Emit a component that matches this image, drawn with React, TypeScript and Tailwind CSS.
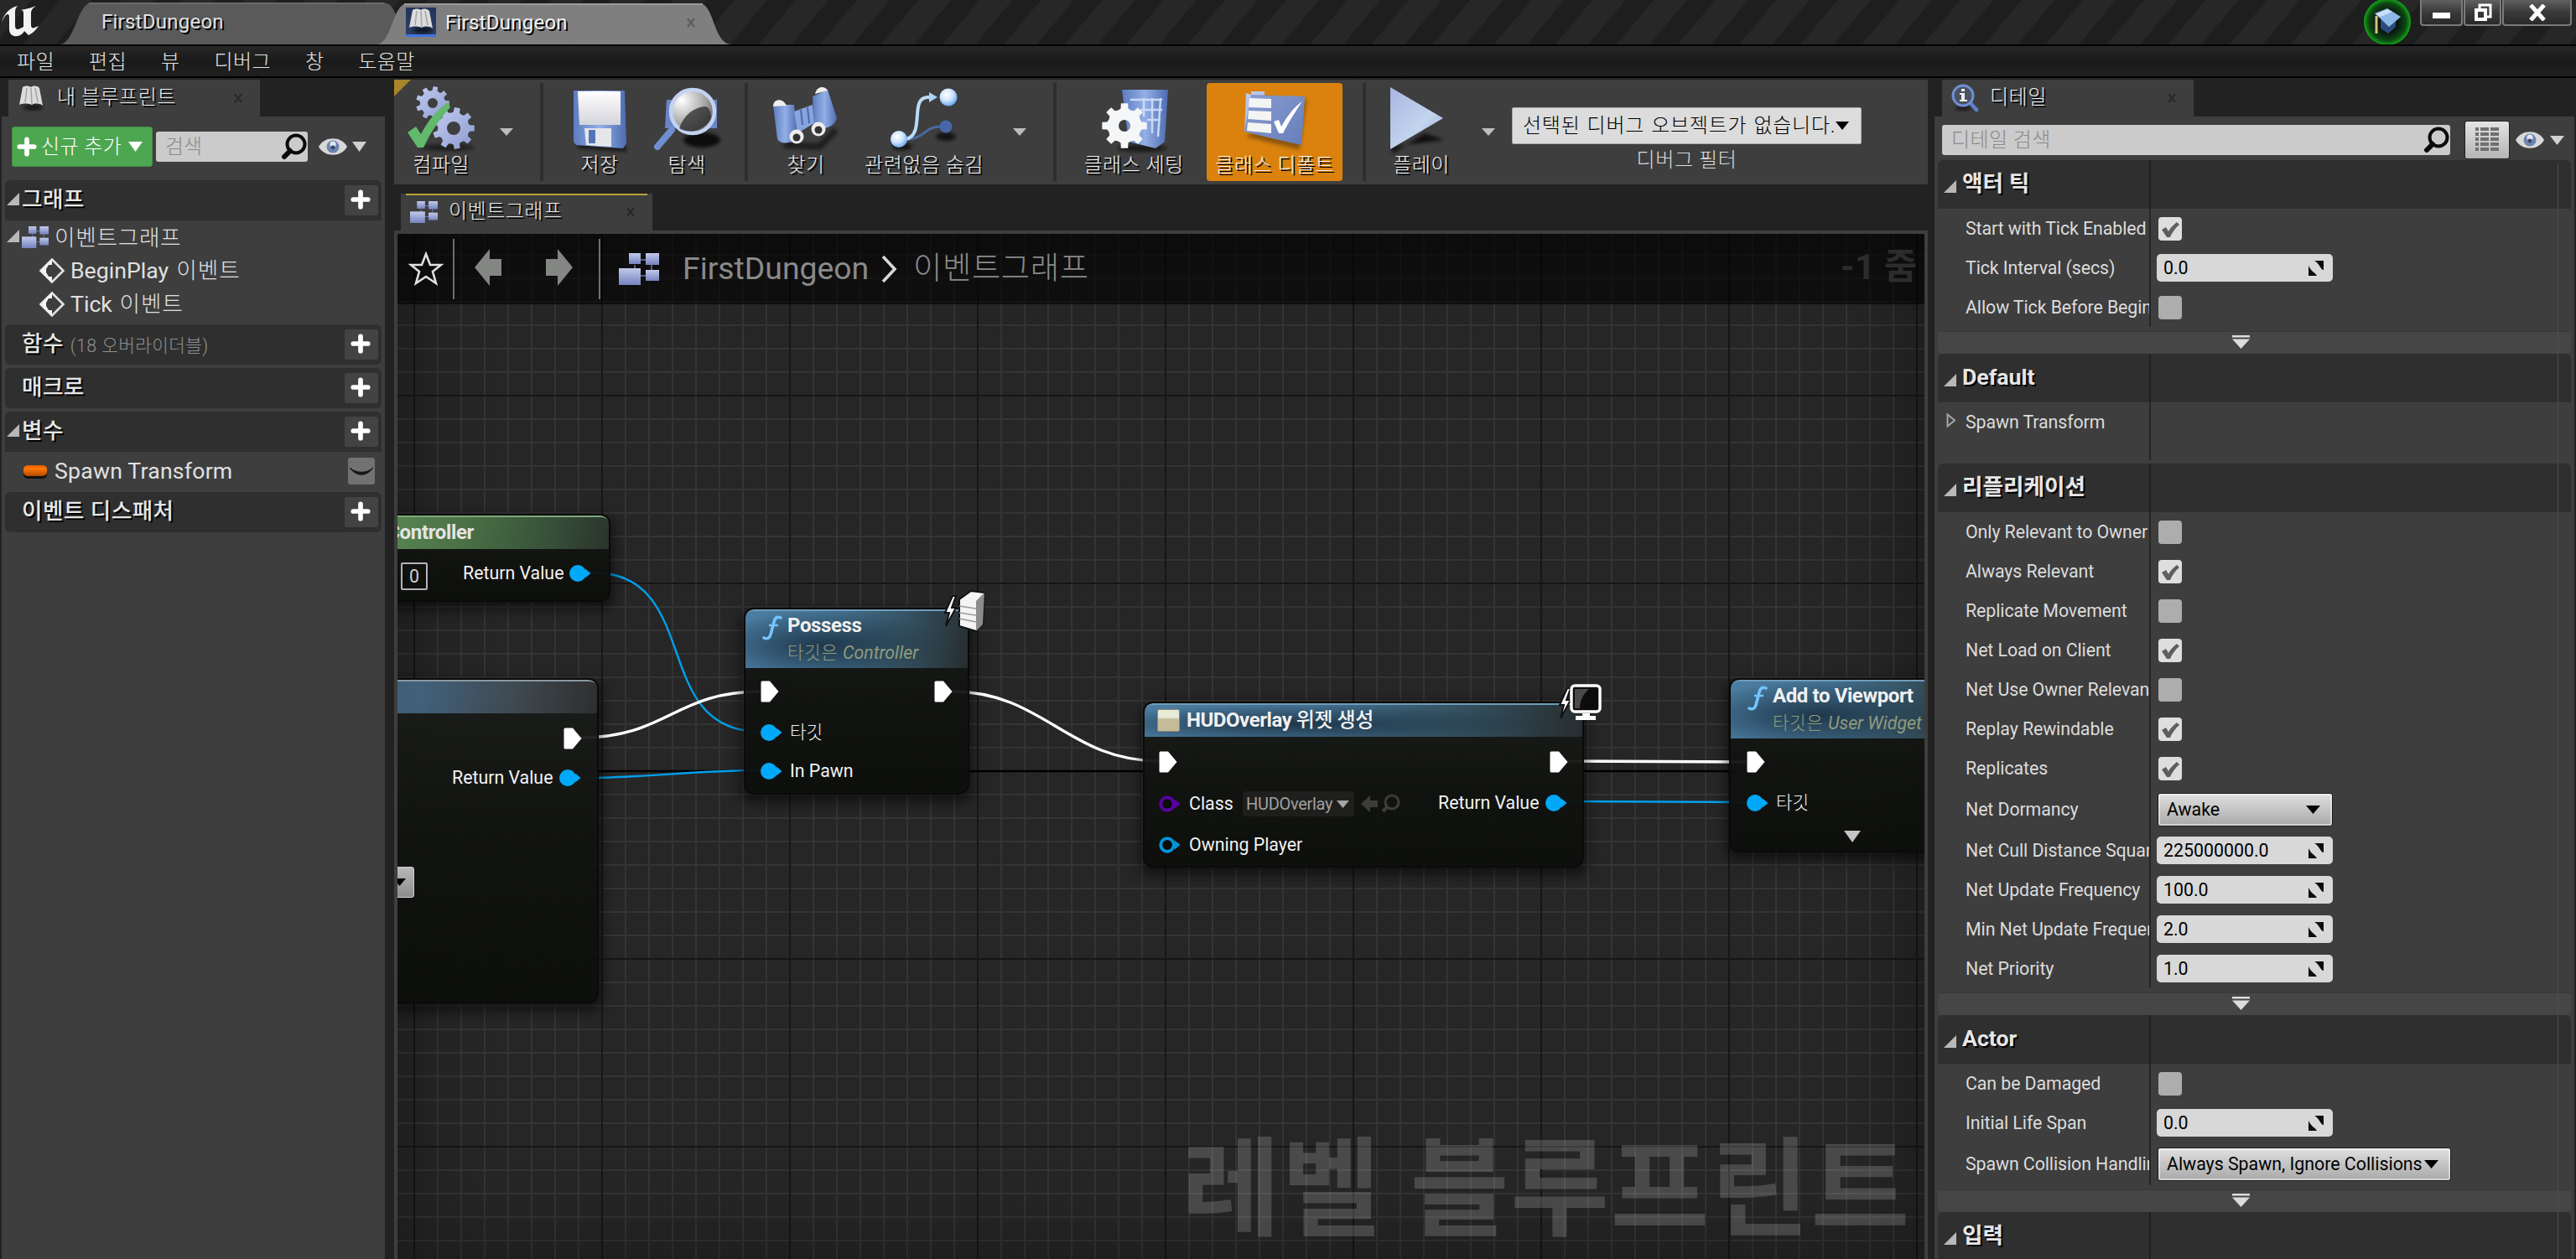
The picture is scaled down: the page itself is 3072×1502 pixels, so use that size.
import React from 'react';

const SHADOW = '[text-shadow:2px_2px_0_#000]';

function gearPath(cx: number, cy: number, r: number, teeth: number, hole: number) {
  const pts: string[] = [];
  for (let i = 0; i < teeth; i++) {
    const a = (i / teeth) * Math.PI * 2;
    const s = Math.PI / teeth;
    const add = (ang: number, rad: number) =>
      pts.push(`${(cx + Math.cos(ang) * rad).toFixed(1)} ${(cy + Math.sin(ang) * rad).toFixed(1)}`);
    add(a - s * 0.95, r * 0.74);
    add(a - s * 0.55, r * 0.78);
    add(a - s * 0.4, r);
    add(a + s * 0.4, r);
    add(a + s * 0.55, r * 0.78);
  }
  return `M${pts.join('L')}Z M${cx - hole} ${cy}a${hole} ${hole} 0 1 0 ${hole * 2} 0a${hole} ${hole} 0 1 0 ${-hole * 2} 0Z`;
}

function Defs() {
  return (
    <svg className="absolute h-0 w-0">
      <defs>
        <linearGradient id="blue" x1="0" y1="0" x2="1" y2="1">
          <stop offset="0" stopColor="#c3d0f2" />
          <stop offset="1" stopColor="#6f86c4" />
        </linearGradient>
        <linearGradient id="gear" x1="0" y1="0" x2="1" y2="1">
          <stop offset="0" stopColor="#c3cdf0" />
          <stop offset="1" stopColor="#8c9ad0" />
        </linearGradient>
        <linearGradient id="deep" x1="0" y1="0" x2="1" y2="0">
          <stop offset="0" stopColor="#5d7cc0" />
          <stop offset="0.5" stopColor="#93afe6" />
          <stop offset="1" stopColor="#4d6bb0" />
        </linearGradient>
        <linearGradient id="cell" x1="0" y1="0" x2="0" y2="1">
          <stop offset="0" stopColor="#c2caea" />
          <stop offset="1" stopColor="#7583c0" />
        </linearGradient>
        <linearGradient id="play" x1="0" y1="0" x2="1" y2="1">
          <stop offset="0" stopColor="#a9b5e2" />
          <stop offset="0.6" stopColor="#c3d5ee" />
          <stop offset="1" stopColor="#a0aad8" />
        </linearGradient>
        <linearGradient id="white" x1="0" y1="0" x2="0" y2="1">
          <stop offset="0" stopColor="#fff" />
          <stop offset="1" stopColor="#d4d4dc" />
        </linearGradient>
        <radialGradient id="ball" cx="0.4" cy="0.35" r="0.7">
          <stop offset="0" stopColor="#fff" />
          <stop offset="0.5" stopColor="#cfe6ff" />
          <stop offset="1" stopColor="#5f9fe8" />
        </radialGradient>
        <radialGradient id="lens" cx="0.25" cy="0.25" r="0.9">
          <stop offset="0" stopColor="#fff" />
          <stop offset="0.6" stopColor="#a5a5a5" />
          <stop offset="1" stopColor="#555" />
        </radialGradient>
        <linearGradient id="pill" x1="0" y1="0" x2="0" y2="1">
          <stop offset="0" stopColor="#e05a00" />
          <stop offset="0.3" stopColor="#ff7800" />
          <stop offset="1" stopColor="#b34a00" />
        </linearGradient>
        <filter id="soft" x="-50%" y="-50%" width="200%" height="200%">
          <feGaussianBlur stdDeviation="2" />
        </filter>
      </defs>
    </svg>
  );
}

function Down({ w = 16, h = 12, c = '#d0d0d0' }: { w?: number; h?: number; c?: string }) {
  return (
    <svg width={w} height={h} viewBox="0 0 16 12" preserveAspectRatio="none" className="shrink-0">
      <path d="M0 0H16L8 12Z" fill={c} />
    </svg>
  );
}

function Expanded() {
  return (
    <svg width="15" height="15" viewBox="0 0 15 15" className="shrink-0">
      <path d="M15 0V15H0Z" fill="#b8b8b8" />
    </svg>
  );
}

function CloseX({ c = '#292929' }: { c?: string }) {
  return (
    <svg width="12" height="12" viewBox="0 0 12 12" className="shrink-0">
      <path d="M2 1L10 11M10 1L2 11" stroke={c} strokeWidth="2.2" />
    </svg>
  );
}

function GraphIcon({ w, h }: { w: number; h: number }) {
  return (
    <svg width={w} height={h} viewBox="0 0 48 38" preserveAspectRatio="none" className="shrink-0">
      <path d="M24 8H34M39 12V22M24 27H34M19 14V20" stroke="#6d7aa8" strokeWidth="1.5" />
      <rect x="12" y="0" width="14" height="13" fill="url(#cell)" />
      <rect x="32" y="0" width="16" height="14" fill="url(#cell)" />
      <rect x="0" y="18" width="26" height="20" fill="url(#cell)" />
      <rect x="32" y="20" width="16" height="13" fill="url(#cell)" />
    </svg>
  );
}

function BookIcon() {
  return (
    <svg width="32" height="32" viewBox="0 0 32 32" className="shrink-0">
      <ellipse cx="18" cy="27" rx="12" ry="4" fill="#000" opacity="0.6" filter="url(#soft)" />
      <path d="M6 3C9 1 13 1 16 3C19 1 23 1 26 4L30 25C26 22 21 22 17 24C12 22 6 22 2 24Z" fill="#dcdcdc" />
      <path d="M11 4L9 21M16 4L17 23M21 4L24 21" stroke="#a4a4a4" strokeWidth="1.5" />
    </svg>
  );
}

function SearchIcon() {
  return (
    <svg width="32" height="32" viewBox="0 0 32 32" className="shrink-0">
      <circle cx="18" cy="13" r="10.5" fill="none" stroke="#0a0a0a" strokeWidth="4" />
      <path d="M11 21L4 28" stroke="#0a0a0a" strokeWidth="6" strokeLinecap="round" />
    </svg>
  );
}

function EyeIcon() {
  return (
    <svg width="36" height="22" viewBox="0 0 36 22" className="shrink-0">
      <path d="M1 11C8 -2 28 -2 35 11C28 24 8 24 1 11Z" fill="#d8d8d8" />
      <circle cx="18" cy="11" r="7.5" fill="#6d84b0" />
      <circle cx="18" cy="8" r="3.6" fill="#dfe6f2" />
      <circle cx="18" cy="12" r="2.4" fill="#39466b" />
    </svg>
  );
}

function PlusIcon({ s = 22 }: { s?: number }) {
  return (
    <svg width={s} height={s} viewBox="0 0 22 22" className="shrink-0">
      <path d="M11 3V19M3 11H19" stroke="#fff" strokeWidth="5.2" strokeLinecap="round" />
    </svg>
  );
}

function Logo() {
  return (
    <svg width="48" height="46" viewBox="0 0 48 46" className="shrink-0">
      <path
        d="M2 27C4 17 12 9 21 7C19 9 18 11 18 14V31C18 35 21 36 24 34L28 32V16C28 13 27 12 25 12C30 11 35 10 43 7C38 10 37 13 37 16V30C37 33 39 34 41 33L46 31C43 36 38 40 34 42L29 37C27 41 22 44 17 43C13 42 11 39 11 35V20C11 17 9 16 7 18C5 20 3 24 2 27Z"
        fill="#f2f2f2"
      />
    </svg>
  );
}

function WindowButton({ w, children }: { w: string; children: React.ReactNode }) {
  return (
    <div
      className={`${w} flex h-[31px] items-center justify-center rounded-b-[4px] border-2 border-t-0 border-[#7b7b7b] bg-gradient-to-b from-[#606060] via-[#3a3a3a] to-[#2a2a2a]`}
    >
      {children}
    </div>
  );
}

function TitleBar() {
  return (
    <div className="flex h-[53px] shrink-0 bg-[repeating-linear-gradient(130deg,#272727_0px,#272727_28px,#1e1e1e_30px,#1e1e1e_54px,#272727_56px)]">
      <div className="w-[72px]">
        <Logo />
      </div>
      <div className="relative h-[53px] w-[378px]">
        <svg width="408" height="53" viewBox="0 0 408 53" className="absolute left-0 top-0">
          <path d="M0 53C18 50 20 3 38 3H382C396 3 398 12 403 25L408 53Z" fill="#5a5a5a" />
          <path d="M34 4H386" stroke="#727272" strokeWidth="1.5" />
        </svg>
        <div className={`relative pt-[10px] pl-[49px] text-[24px] leading-[32px] tracking-[0.25px] text-[#e0e0e0] ${SHADOW}`}>FirstDungeon</div>
      </div>
      <div className="relative h-[53px] w-[421px]">
        <svg width="421" height="53" viewBox="0 0 421 53" className="absolute left-0 top-0">
          <path d="M0 53C18 50 18 4 36 4H384C402 4 400 50 421 53Z" fill="#7f7f7f" />
          <path d="M32 5H388" stroke="#9c9c9c" strokeWidth="2" />
        </svg>
        <div className="relative flex h-[53px] items-center pl-[34px]">
          <div className="h-[35px] w-[36px] border-b-[3px] border-[#3f74e0] bg-gradient-to-b from-[#22355c] to-[#2c3f66] pl-[2px]">
            <BookIcon />
          </div>
          <div className={`ml-[11px] w-[287px] text-[24px] leading-[32px] tracking-[0.25px] text-[#f0f0f0] ${SHADOW}`}>FirstDungeon</div>
          <CloseX c="#5c5c5c" />
        </div>
      </div>
      <div className="flex-1" />
      <svg width="56" height="56" viewBox="0 0 56 56" className="mr-[11px] -mt-[2px] shrink-0">
        <defs>
          <radialGradient id="ring">
            <stop offset="0.45" stopColor="#0b1410" />
            <stop offset="0.8" stopColor="#0c4a12" />
            <stop offset="1" stopColor="#12a81a" />
          </radialGradient>
        </defs>
        <circle cx="28" cy="28" r="28" fill="url(#ring)" />
        <path d="M20 26V36L29 42L38 34V24Z" fill="#2a4c7c" />
        <path d="M13 18L28 12L44 22L30 34Z" fill="#8db8e6" />
        <path d="M14 19L28 13L34 16L20 22Z" fill="#c8e0f6" />
        <path d="M15 21V42" stroke="#d9c07a" strokeWidth="3" />
      </svg>
      <div className="mr-[5px] flex gap-[1px]">
        <WindowButton w="w-[51px]">
          <div className="mt-[8px] h-[7px] w-[21px] bg-white" />
        </WindowButton>
        <WindowButton w="w-[45px]">
          <svg width="22" height="22" viewBox="0 0 22 22">
            <path d="M7 6V2H20V16H16" fill="none" stroke="#fff" strokeWidth="3" />
            <rect x="3" y="8" width="11" height="11" fill="none" stroke="#fff" strokeWidth="4" />
          </svg>
        </WindowButton>
        <WindowButton w="w-[83px]">
          <svg width="22" height="20" viewBox="0 0 22 20">
            <path d="M3 1L19 19M19 1L3 19" stroke="#fff" strokeWidth="5" />
          </svg>
        </WindowButton>
      </div>
    </div>
  );
}

function MenuBar() {
  return (
    <div className="flex h-[40px] shrink-0 items-center gap-[41px] border-y-2 border-black bg-gradient-to-b from-[#272727] via-[#1a1a1a] to-[#202020] pl-[20px] pt-[1px] text-[24px] font-light tracking-[0.4px] text-[#e4e4e4]">
      {['파일', '편집', '뷰', '디버그', '창', '도움말'].map((m) => (
        <div key={m}>{m}</div>
      ))}
    </div>
  );
}

function PanelTab({ icon, label, gap }: { icon: React.ReactNode; label: string; gap: string }) {
  return (
    <div className="flex h-[44px] w-[300px] items-center bg-[#3e3e3e] pl-[11px] pr-[20px]">
      <div className={gap}>{icon}</div>
      <div className={`flex-1 pb-[2px] text-[24px] leading-[32px] font-light tracking-[0.5px] text-[#e8e8e8] ${SHADOW}`}>{label}</div>
      <CloseX />
    </div>
  );
}

function TreeSection({ label, note, open, square }: { label: string; note?: string; open?: boolean; square?: boolean }) {
  return (
    <div className={`flex h-[48px] shrink-0 items-center bg-[#2f2f2f] pl-[2px] pr-[4px] ${square ? 'rounded-t-[6px]' : 'rounded-[6px]'}`}>
      <div className="w-[18px] pb-[3px]">{open && <Expanded />}</div>
      <div className={`pb-[2px] text-[26.67px] leading-[36px] font-medium tracking-[0.4px] text-[#e6e6e6] ${SHADOW}`}>{label}</div>
      {note && <div className="ml-[8px] pt-[4px] text-[21.33px] font-light tracking-[0.4px] text-[#8f8f8f]">{note}</div>}
      <div className="flex-1" />
      <div className="flex h-[36px] w-[40px] items-center justify-center rounded-[3px] bg-[#434343] pb-[2px] pr-[2px]">
        <PlusIcon s={24} />
      </div>
    </div>
  );
}

function EventIcon() {
  return (
    <svg width="32" height="32" viewBox="0 0 32 32" className="shrink-0">
      <path d="M16 2.5L29.5 16L16 29.5L2.5 16Z" fill="none" stroke="#e2e2e2" strokeWidth="2.6" />
      <path d="M16 2L2 16L16 30V23H12L9 18V14L12 9H16Z" fill="#f4f4f4" />
    </svg>
  );
}

function LeftPanel() {
  return (
    <div className="flex w-[459px] shrink-0 flex-col pl-[2px] pt-[2px]">
      <div className="pl-[8px]">
        <PanelTab icon={<BookIcon />} label="내 블루프린트" gap="w-[47px]" />
      </div>
      <div className="flex flex-1 flex-col bg-[#3e3e3e] pl-[4px] pr-[4px]">
        <div className="flex h-[76px] items-center pb-[4px] pl-[8px]">
          <div className="flex h-[48px] w-[168px] items-center rounded-[3px] border border-[#3f8f43] bg-[#4da751] pl-[5px]">
            <PlusIcon s={24} />
            <div className="ml-[5px] w-[104px] text-[24px] font-light tracking-[0.4px] whitespace-nowrap text-white">신규 추가</div>
            <Down w={17} h={12} c="#fff" />
          </div>
          <div className="ml-[4px] flex h-[36px] w-[181px] items-center justify-between rounded-[3px] bg-[#cbcbcb] pl-[11px] text-[24px] font-light text-[#8a8a8a]">
            검색
            <SearchIcon />
          </div>
          <div className="ml-[12px] flex items-center gap-[5px]">
            <EyeIcon />
            <Down w={17} h={12} />
          </div>
        </div>
        <TreeSection label="그래프" open square />
        <div className="flex h-[120px] flex-col text-[26.67px] text-[#e0e0e0]">
          <div className="flex h-[40px] items-center pl-[2px] font-light">
            <div className="pb-[3px]">
              <Expanded />
            </div>
            <div className="ml-[3px]">
              <GraphIcon w={32} h={26} />
            </div>
            <div className="ml-[7px] pt-[1px] tracking-[0.7px]">이벤트그래프</div>
          </div>
          <div className="flex h-[40px] items-center pl-[40px]">
            <EventIcon />
            <div className="ml-[6px] [word-spacing:2.5px]">BeginPlay <span className="font-light tracking-[1px]">이벤트</span></div>
          </div>
          <div className="flex h-[40px] items-center pl-[40px]">
            <EventIcon />
            <div className="ml-[6px] [word-spacing:2px]">Tick <span className="font-light tracking-[0.9px]">이벤트</span></div>
          </div>
        </div>
        <div className="mt-[4px] flex flex-col gap-[4px]">
          <TreeSection label="함수" note="(18 오버라이더블)" />
          <TreeSection label="매크로" />
          <TreeSection label="변수" open square />
        </div>
        <div className="flex h-[48px] items-center pb-[3px] pl-[21px] pr-[8px]">
          <svg width="30" height="18" viewBox="0 0 30 18" className="mt-[3px]">
            <rect x="1" y="4" width="28" height="13" rx="5" fill="#111" />
            <rect x="1" y="1" width="28" height="13" rx="5" fill="url(#pill)" />
          </svg>
          <div className="ml-[8px] flex-1 text-[26.67px] tracking-[0.2px] text-[#e0e0e0]">Spawn Transform</div>
          <div className="flex h-[32px] w-[32px] items-center justify-center rounded-[3px] bg-[#727272]">
            <svg width="28" height="12" viewBox="0 0 28 12">
              <path d="M0 2C8 9 20 9 28 2C20 13 8 13 0 2Z" fill="#161616" stroke="#161616" />
            </svg>
          </div>
        </div>
        <TreeSection label="이벤트 디스패처" />
      </div>
    </div>
  );
}

function ToolButton({ w, label, active, children }: { w: string; label: string; active?: boolean; children: React.ReactNode }) {
  return (
    <div className={`${w} flex h-[117px] shrink-0 flex-col items-center rounded-[4px] ${active ? 'bg-[#da820d]' : ''}`}>
      <svg width="88" height="86" viewBox="0 0 88 86" className="shrink-0">
        {children}
      </svg>
      <div className={`text-[24px] leading-[24px] font-light tracking-[0.5px] whitespace-nowrap text-[#ededed] ${SHADOW}`}>{label}</div>
    </div>
  );
}

function Sep({ m }: { m: string }) {
  return <div className={`${m} h-[117px] w-[4px] shrink-0 bg-[#2e2e2e]`} />;
}

function Arrow() {
  return (
    <div className="w-[16px] shrink-0">
      <Down w={16} h={9} c="#bdbdbd" />
    </div>
  );
}

function Toolbar() {
  return (
    <div className="relative flex h-[125px] shrink-0 items-center bg-[#3e3e3e] pl-[4px]">
      <svg width="20" height="20" viewBox="0 0 20 20" className="absolute left-0 top-0">
        <path d="M0 0H20L0 20Z" fill="#a8842a" />
      </svg>
      <ToolButton w="w-[104px]" label="컴파일">
        <ellipse cx="52" cy="77" rx="32" ry="4" fill="#000" opacity="0.5" filter="url(#soft)" />
        <path d={gearPath(34, 24, 20, 9, 6)} fill="url(#gear)" fillRule="evenodd" />
        <path d={gearPath(59, 54, 25, 9, 8)} fill="url(#gear)" fillRule="evenodd" />
        <path d="M4 59L14 52L20 61C27 47 40 31 52 23L55 29C43 42 31 60 23 77H16Z" fill="#62b96c" />
      </ToolButton>
      <div className="ml-[18px]">
        <Arrow />
      </div>
      <Sep m="ml-[32px]" />
      <ToolButton w="w-[104px] ml-[15px]" label="저장">
        <path d="M16 72L76 76V82L20 78Z" fill="#000" opacity="0.6" filter="url(#soft)" />
        <path d="M13 9H74L76 72L72 78L16 74L13 70Z" fill="url(#deep)" />
        <path d="M18 10H69V50H20Z" fill="url(#white)" />
        <path d="M26 54H58V76L28 74Z" fill="#e6e6ea" />
        <rect x="31" y="56" width="8" height="16" fill="#5573b8" />
      </ToolButton>
      <ToolButton w="w-[104px]" label="탐색">
        <ellipse cx="62" cy="68" rx="22" ry="9" fill="#000" opacity="0.8" filter="url(#soft)" />
        <path d="M20 20H80V54H18Z" fill="#6a86c6" />
        <path d="M9 76L26 56" stroke="#6f8fd0" strokeWidth="8" strokeLinecap="round" />
        <circle cx="51" cy="34" r="26" fill="url(#lens)" stroke="#c4d2f2" strokeWidth="4.5" />
        <path d="M35 54C43 60 63 60 73 42C73 32 69 28 65 28C51 30 41 38 35 54Z" fill="#2a2a2a" opacity="0.75" />
      </ToolButton>
      <Sep m="ml-[17px]" />
      <ToolButton w="w-[104px] ml-[17px]" label="찾기">
        <path d="M18 74L60 76L80 56" stroke="#000" strokeWidth="8" opacity="0.5" fill="none" filter="url(#soft)" />
        <path d="M5 26L30 26L34 66C28 72 14 74 10 67Z" fill="url(#deep)" />
        <path d="M52 16L70 8L81 42C78 54 60 58 54 50Z" fill="url(#deep)" />
        <path d="M5 28C5 19 16 17 21 27Z M55 13C57 3 67 3 70 9Z" fill="#f0eee8" />
        <path d="M30 34L52 26L54 48L34 60Z" fill="#88a4de" />
        <path d="M38 32L40 50M46 29L48 48" stroke="#4d68a8" strokeWidth="2" />
        <circle cx="33" cy="64" r="8.5" fill="#ececec" />
        <circle cx="33" cy="65" r="4.5" fill="#333" />
        <circle cx="59" cy="55" r="8.5" fill="#ececec" />
        <circle cx="59" cy="56" r="4.5" fill="#333" />
      </ToolButton>
      <ToolButton w="w-[178px]" label="관련없음 숨김">
        <ellipse cx="70" cy="64" rx="12" ry="5" fill="#000" opacity="0.7" filter="url(#soft)" />
        <ellipse cx="18" cy="76" rx="12" ry="4" fill="#000" opacity="0.7" filter="url(#soft)" />
        <path d="M24 67C46 66 44 52 64 52" stroke="#4a68a0" strokeWidth="3" fill="none" />
        <path d="M22 67C46 62 26 18 48 17H54" stroke="#b9dcf6" strokeWidth="4" fill="none" />
        <path d="M50 11L60 17L50 23Z" fill="#a9d2f4" />
        <circle cx="14" cy="67" r="10" fill="url(#ball)" />
        <circle cx="73" cy="17" r="10.5" fill="url(#ball)" />
        <circle cx="70" cy="52" r="7.5" fill="#4766a8" />
      </ToolButton>
      <div className="ml-[17px]">
        <Arrow />
      </div>
      <Sep m="ml-[32px]" />
      <ToolButton w="w-[154px] ml-[15px]" label="클래스 세팅">
        <ellipse cx="54" cy="78" rx="30" ry="4" fill="#000" opacity="0.6" filter="url(#soft)" />
        <path d="M30 8H85L81 70L70 78L38 70Z" fill="url(#deep)" />
        <path d="M40 20H78M52 32H78M60 44H76M56 18V40M66 18V60M76 18L73 64" stroke="#c9daf6" strokeWidth="2.5" fill="none" />
        <path d={gearPath(33, 51, 27, 8, 7)} fill="#f4f6f8" fillRule="evenodd" />
      </ToolButton>
      <ToolButton w="w-[162px] ml-[10px]" label="클래스 디폴트" active>
        <path d="M10 64L74 80L82 20L76 18Z" fill="#5b3a0c" opacity="0.6" filter="url(#soft)" />
        <path d="M16 14V10H32V15L80 16L76 74L8 58L10 12Z" fill="url(#blue)" />
        <path d="M16 14L80 16L76 74L8 58Z" fill="#5d76b4" opacity="0.55" />
        <path d="M14 18L40 19V30L13 29Z M13 33L40 34V45L12 43Z M12 47L40 49V60L11 57Z" fill="#f4f4f4" />
        <path d="M43 46L49 44L52 52C60 38 68 28 77 22C69 34 60 48 54 60H49Z" fill="#fff" />
      </ToolButton>
      <Sep m="ml-[24px]" />
      <ToolButton w="w-[110px] ml-[11px]" label="플레이">
        <path d="M8 76L72 68L48 60L10 84Z" fill="#000" opacity="0.75" filter="url(#soft)" />
        <path d="M7 5L70 42L7 79Z" fill="url(#play)" />
      </ToolButton>
      <div className="ml-[17px]">
        <Arrow />
      </div>
      <div className="ml-[20px] flex w-[417px] shrink-0 flex-col items-center pt-[19px]">
        <div className="flex h-[44px] w-[417px] items-center justify-between rounded-[2px] border border-[#aaa] bg-[#dcdcdc] pl-[12px] pr-[15px] text-[24px] whitespace-nowrap text-black">
          <span className="font-light tracking-[0.75px] [word-spacing:1.5px]">선택된 디버그 오브젝트가 없습니다.</span>
          <Down w={16} h={10} c="#000" />
        </div>
        <div className="mt-[3px] text-[24px] leading-[32px] font-light tracking-[0.6px] text-[#dcdcdc]">디버그 필터</div>
      </div>
    </div>
  );
}

function Pin({ c = '#00a8f8', hollow }: { c?: string; hollow?: boolean }) {
  return (
    <svg width="26" height="22" viewBox="0 0 26 22" className="shrink-0">
      <path d="M19 5.5L25.5 11L19 16.5Z" fill={c} />
      {hollow ? (
        <circle cx="10" cy="11" r="7.8" fill="#0a0c0a" stroke={c} strokeWidth="3.8" />
      ) : (
        <circle cx="10" cy="11" r="10" fill={c} />
      )}
    </svg>
  );
}

function Exec() {
  return (
    <svg width="22" height="26" viewBox="0 0 22 26" className="shrink-0">
      <path d="M2 0.5H11L21.5 13L11 25.5H2Q0.5 25.5 0.5 24V2Q0.5 0.5 2 0.5Z" fill="#fff" />
    </svg>
  );
}

function Node({ place, head, header, children }: { place: string; head: string; header: React.ReactNode; children: React.ReactNode }) {
  return (
    <div className={`absolute overflow-hidden rounded-[12px] border-2 border-[#0a0a0a] bg-gradient-to-b from-[#1b1d1a]/95 via-[#10120f]/95 to-[#0c0e0b]/95 shadow-[0_6px_14px_4px_rgba(0,0,0,0.5)] ${place}`}>
      <div className={`shrink-0 rounded-t-[9px] border-t-2 ${head}`}>{header}</div>
      {children}
    </div>
  );
}

const BLUE_HEAD =
  'border-[#6f9cba] bg-[radial-gradient(ellipse_55%_60%_at_35%_60%,rgba(24,45,62,0.85),transparent),linear-gradient(100deg,#4c7ea3_0%,#436f8e_40%,#34505f_72%,#262d2f_100%)]';

function FuncIcon() {
  return (
    <svg width="24" height="30" viewBox="0 0 24 30" className="shrink-0">
      <path d="M22 3C18 1 15 3 14 8L10 23C9 27 6 29 2 27" stroke="#74c4ff" strokeWidth="3.6" fill="none" strokeLinecap="round" />
      <path d="M8 12H19" stroke="#74c4ff" strokeWidth="2.6" />
    </svg>
  );
}

function Bolt() {
  return <path d="M10 8L1 28H6L2 44L14 22H9L14 8Z" fill="#fff" stroke="#111" strokeWidth="2" />;
}

function FuncHeader({ title, target }: { title: string; target: string }) {
  return (
    <div className="flex h-[68px] pl-[20px]">
      <div className="pt-[5px]">
        <FuncIcon />
      </div>
      <div className="ml-[6px] flex flex-col whitespace-nowrap">
        <div className="mt-[2px] text-[24px] leading-[30px] font-bold tracking-[-0.4px] text-[#f0f0f0]">{title}</div>
        <div className="mt-[4px] text-[21.33px] leading-[28px] text-[#8f9b7c]">
          <span className="font-light tracking-[0.5px]">타깃은 </span>
          <span className="italic">{target}</span>
        </div>
      </div>
    </div>
  );
}

const PIN_TEXT = 'text-[21.33px] leading-[28px] whitespace-nowrap text-[#f2f2f2]';

function Graph() {
  const wires = [
    ['M706 683C840 683 773 873 907 873', '#00a0ec', 2.4],
    ['M693 880C795 880 805 825 907 825', '#fff', 3.4],
    ['M700 928C770 928 830 919 907 919', '#00a0ec', 2.4],
    ['M1135 825C1245 825 1273 908 1383 908', '#fff', 3.4],
    ['M1869 908L2083 909', '#fff', 3.6],
    ['M1868 956L2083 957', '#00a0ec', 2.4],
  ] as const;
  return (
    <div className="relative flex-1 overflow-hidden border-4 border-b-0 border-[#3e3e3e] bg-[#262626]">
      <svg width="1821" height="1223" viewBox="474 279 1821 1223" className="absolute left-0 top-0">
        <defs>
          <pattern id="minor" x="493" y="695" width="28" height="28" patternUnits="userSpaceOnUse">
            <path d="M0 1H28M1 0V28" stroke="#343434" strokeWidth="2" />
          </pattern>
          <pattern id="major" x="493" y="695" width="224" height="224" patternUnits="userSpaceOnUse">
            <path d="M0 1H224M1 0V224" stroke="#161616" strokeWidth="2" />
          </pattern>
        </defs>
        <rect x="474" y="279" width="1821" height="1223" fill="url(#minor)" />
        <rect x="474" y="279" width="1821" height="1223" fill="url(#major)" />
        <path d="M474 920H2295" stroke="#000" strokeWidth="2.5" />
      </svg>
      <div className="absolute inset-0 shadow-[inset_0_0_90px_20px_rgba(0,0,0,0.28)]" />
      <div className="absolute bottom-[7px] right-[16px] text-[128px] leading-[150px] font-bold tracking-[1.7px] whitespace-nowrap text-white/[0.17]">레벨 블루프린트</div>
      <svg width="1821" height="1223" viewBox="474 279 1821 1223" className="absolute left-0 top-0">
        {wires.map(([d, c, w]) => (
          <path key={d} d={d} stroke={c} strokeWidth={w} fill="none" />
        ))}
      </svg>

      <Node
        place="left-[-60px] top-[334px] h-[105px] w-[314px]"
        head="border-[#7ea878] bg-[linear-gradient(100deg,#5f8f57_0%,#4a7045_45%,#38523a_75%,#2b332b_100%)]"
        header={<div className="flex h-[38px] items-center justify-end pb-[2px] pr-[161px] text-[24px] font-bold tracking-[-0.35px] text-[#e4e4e4]">Controller</div>}
      >
        <div className="flex items-center pl-[62px] pt-[10px]">
          <div className="mt-[6px] flex h-[33px] w-[32px] items-center justify-center rounded-[2px] border-2 border-[#b5b5b5] text-[21.33px] text-[#cfcfcf]">0</div>
          <div className={`ml-[42px] w-[127px] pb-[2px] ${PIN_TEXT}`}>Return Value</div>
          <div className="pb-[2px]">
            <Pin />
          </div>
        </div>
      </Node>

      <Node
        place="left-[-60px] top-[530px] h-[388px] w-[300px]"
        head="border-[#8a98a2] bg-[linear-gradient(100deg,#3f5f78_0%,#41607a_30%,#3f4a52_65%,#2e2e2e_100%)]"
        header={<div className="h-[38px]" />}
      >
        <div className="flex flex-col">
          <div className="flex h-[56px] items-center justify-end pt-[3px] pr-[18px]">
            <Exec />
          </div>
          <div className="flex h-[42px] items-center justify-end pr-[19px]">
            <div className={`w-[128px] ${PIN_TEXT}`}>Return Value</div>
            <Pin />
          </div>
          <div className="mt-[85px] flex h-[37px] w-[78px] items-center justify-end rounded-[3px] border border-[#d0d0d0] bg-gradient-to-b from-[#b8b8b8] to-[#8d8d8d] pr-[9px]">
            <Down w={15} h={9} c="#000" />
          </div>
        </div>
      </Node>

      <Node place="left-[413px] top-[446px] h-[223px] w-[269px]" head={BLUE_HEAD} header={<FuncHeader title="Possess" target="Controller" />}>
        <div className="flex justify-between pt-[4px] pl-[18px] pr-[18px]">
          <div className="flex flex-col">
            <div className="flex h-[48px] items-center">
              <Exec />
            </div>
            <div className="flex h-[49px] items-center gap-[9px]">
              <Pin />
              <div className={`${PIN_TEXT} font-light`}>타깃</div>
            </div>
            <div className="flex h-[43px] items-center gap-[9px]">
              <Pin />
              <div className={PIN_TEXT}>In Pawn</div>
            </div>
          </div>
          <div className="flex h-[48px] items-center">
            <Exec />
          </div>
        </div>
      </Node>
      <svg width="52" height="52" viewBox="0 0 52 52" className="absolute left-[652px] top-[424px]">
        <Bolt />
        <path d="M18 12L32 2L48 4L46 42L38 50L18 44Z" fill="#f4f4f4" stroke="#111" strokeWidth="2" />
        <path d="M38 14L48 4L46 42L38 50Z" fill="#8c8c8c" />
        <path d="M18 20L38 23M18 28L38 31M18 35L38 39" stroke="#9a9a9a" strokeWidth="1.5" />
      </svg>

      <Node
        place="left-[889px] top-[558px] h-[198px] w-[526px]"
        head={BLUE_HEAD}
        header={
          <div className="flex h-[38px] items-center pl-[15px]">
            <div className="mb-[2px] h-[27px] w-[27px] rounded-[2px] border border-[#8d8a75] bg-gradient-to-b from-[#e6ead8] from-35% to-[#c4bb98] to-45%" />
            <div className="ml-[8px] pb-[2px] text-[24px] leading-[32px] font-bold tracking-[-0.45px] whitespace-nowrap text-[#f0f0f0]">
              HUDOverlay <span className="font-medium">위젯 생성</span>
            </div>
          </div>
        }
      >
        <div className="flex justify-between pt-[5px] pl-[17px] pr-[11px]">
          <div className="flex flex-col">
            <div className="flex h-[50px] items-center">
              <Exec />
            </div>
            <div className="flex h-[50px] items-center">
              <Pin c="#5a00a6" hollow />
              <div className={`ml-[10px] w-[64px] ${PIN_TEXT}`}>Class</div>
              <div className="flex h-[30px] w-[133px] items-center gap-[4px] rounded-[4px] bg-white/[0.06] pl-[4px] text-[20px] text-[#a0a0a0]">
                <span className="w-[104px] tracking-[-0.3px]">HUDOverlay</span>
                <Down w={15} h={9} c="#a5a5a5" />
              </div>
              <svg width="50" height="24" viewBox="0 0 50 24" className="ml-[8px]">
                <path d="M0 12L11 2V8H20V16H11V22Z" fill="#3c3d3b" />
                <circle cx="37" cy="10" r="8" fill="none" stroke="#3c3d3b" strokeWidth="3" />
                <path d="M31 16L26 21" stroke="#3c3d3b" strokeWidth="4" />
              </svg>
            </div>
            <div className="flex h-[47px] items-center">
              <Pin hollow c="#0095de" />
              <div className={`ml-[10px] ${PIN_TEXT}`}>Owning Player</div>
            </div>
          </div>
          <div className="flex flex-col items-end">
            <div className="flex h-[50px] items-center pr-[6px]">
              <Exec />
            </div>
            <div className="flex h-[47px] items-center pr-[7px]">
              <div className={`w-[128px] ${PIN_TEXT}`}>Return Value</div>
              <Pin />
            </div>
          </div>
        </div>
      </Node>
      <svg width="52" height="46" viewBox="0 0 52 46" className="absolute left-[1385px] top-[536px]">
        <g transform="translate(0 -2)">
          <Bolt />
        </g>
        <rect x="15" y="3" width="34" height="31" rx="4" fill="#0c0c0c" stroke="#fff" strokeWidth="3.4" />
        <path d="M19 7H36C28 14 25 22 25 30H19Z" fill="#4b4b4b" />
        <path d="M28 36H37V39H44V44H20V39H28Z" fill="#fff" />
      </svg>

      <Node place="left-[1588px] top-[530px] h-[208px] w-[300px]" head={BLUE_HEAD} header={<FuncHeader title="Add to Viewport" target="User Widget" />}>
        <div className="flex flex-col pt-[4px] pl-[19px]">
          <div className="flex h-[48px] items-center">
            <Exec />
          </div>
          <div className="flex h-[49px] items-center gap-[9px]">
            <Pin />
            <div className={`${PIN_TEXT} font-light`}>타깃</div>
          </div>
          <div className="flex h-[32px] items-center pl-[116px]">
            <Down w={20} h={14} c="#c4c4c4" />
          </div>
        </div>
      </Node>

      <div className="relative flex h-[84px] items-center bg-black/60">
        <svg width="42" height="42" viewBox="0 0 42 42" className="ml-[13px]">
          <path d="M21 3L26 16H39L29 24L33 38L21 30L9 38L13 24L3 16H16Z" fill="none" stroke="#e0e0e0" strokeWidth="2.6" />
        </svg>
        <div className="ml-[11px] h-[72px] w-[2px] bg-[#6f6f6f]" />
        <svg width="34" height="44" viewBox="0 0 34 44" className="mb-[4px] ml-[23px]">
          <path d="M1 22L19 0V12H33V32H19V44Z" fill="#848684" />
        </svg>
        <svg width="34" height="44" viewBox="0 0 34 44" className="mb-[4px] ml-[51px]">
          <path d="M33 22L15 0V12H1V32H15V44Z" fill="#848684" />
        </svg>
        <div className="ml-[30px] h-[72px] w-[2px] bg-[#6f6f6f]" />
        <div className="ml-[22px]">
          <GraphIcon w={48} h={38} />
        </div>
        <div className="ml-[28px] w-[236px] text-[37.33px] text-[#8a8a8a]">FirstDungeon</div>
        <svg width="20" height="32" viewBox="0 0 20 32">
          <path d="M3 1L17 16L3 31" fill="none" stroke="#d8d8d8" strokeWidth="3.6" />
        </svg>
        <div className="ml-[19px] text-[37.33px] font-light tracking-[0.6px] text-[#8a8a8a]">이벤트그래프</div>
        <div className="flex-1" />
        <div className="mr-[9px] pb-[7px] text-[42.67px] font-bold text-[#2c2c2c]">-1 줌</div>
      </div>
    </div>
  );
}

function Center() {
  return (
    <div className="ml-[11px] flex w-[1829px] shrink-0 flex-col pt-[2px]">
      <Toolbar />
      <div className="mt-[11px] pl-[8px]">
        <div className="relative w-[300px]">
          <div className="absolute left-[6px] right-[6px] top-0 h-[2px] bg-[#b8a53a]" />
          <PanelTab icon={<GraphIcon w={33} h={26} />} label="이벤트그래프" gap="w-[46px]" />
        </div>
      </div>
      <Graph />
    </div>
  );
}

function Check({ on }: { on?: boolean }) {
  return (
    <div className={`ml-[9px] h-[28px] w-[28px] rounded-[4px] ${on ? 'bg-[#dedede]' : 'bg-[#adadad]'}`}>
      {on && (
        <svg width="28" height="28" viewBox="0 0 28 28">
          <path d="M4 15L9 12L12 17C14 13 18 9 22 6L25 9C20 13 16 19 14 24H10Z" fill="#5e5e5e" />
        </svg>
      )}
    </div>
  );
}

function Num({ v }: { v: string }) {
  return (
    <div className="ml-[7px] flex h-[33px] w-[210px] items-center justify-between rounded-[5px] bg-[#d8d8d8] pl-[8px] pr-[11px] text-[21.33px] text-black">
      {v}
      <svg width="18" height="18" viewBox="0 0 18 18">
        <path d="M7 0H18V11C14 11 14 4 7 0Z M0 6V18H10C8 14 4 14 0 6Z" fill="#0c0c0c" />
      </svg>
    </div>
  );
}

function Select({ v, w }: { v: string; w: string }) {
  return (
    <div className={`ml-[8px] flex h-[40px] items-center justify-between rounded-[3px] border border-[#1c1c1c] bg-gradient-to-b from-[#e0e0e0] to-[#a9a9a9] pl-[10px] pr-[14px] text-[21.33px] whitespace-nowrap text-black shadow-[inset_0_0_0_2px_rgba(255,255,255,0.45)] ${w}`}>
      {v}
      <Down w={17} h={10} c="#000" />
    </div>
  );
}

function Row({ label, tall, caret, children }: { label: string; tall?: boolean; caret?: boolean; children?: React.ReactNode }) {
  return (
    <div className={`flex ${tall ? 'h-[51px]' : 'h-[47px]'}`}>
      <div className="flex w-[254px] shrink-0 items-center overflow-hidden border-r-2 border-[#252525] pt-[1px] text-[21.33px] tracking-[-0.08px] whitespace-nowrap text-[#dcdcdc]">
        <div className="w-[33px] shrink-0 pl-[10px]">
          {caret && (
            <svg width="12" height="17" viewBox="0 0 12 17" className="mb-[6px]">
              <path d="M1.5 1.5L10 8.5L1.5 15.5Z" fill="none" stroke="#a5a5a5" strokeWidth="2" />
            </svg>
          )}
        </div>
        {label}
      </div>
      <div className="flex items-center">{children}</div>
    </div>
  );
}

function Category({ label }: { label: string }) {
  return (
    <div className="flex h-[58px] rounded-t-[6px] bg-[#2f2f2f]">
      <div className="flex w-[254px] items-center border-r-2 border-[#1f1f1f] pl-[7px]">
        <div className="pt-[5px]">
          <Expanded />
        </div>
        <div className={`ml-[7px] pb-[3px] text-[26.67px] leading-[36px] font-bold text-[#e6e6e6] ${SHADOW}`}>{label}</div>
      </div>
    </div>
  );
}

function More() {
  return (
    <div className="mt-[5px] flex h-[27px] items-start justify-center rounded-b-[6px] border-t border-[#383838] bg-[#464646] pr-[32px] pt-[4px]">
      <svg width="21" height="16" viewBox="0 0 21 16">
        <path d="M0 0H21V2.500H0Z M0 4.500H21L10.500 16Z" fill="#dcdcdc" />
      </svg>
    </div>
  );
}

function Details() {
  return (
    <div className="ml-[8px] mr-[2px] flex flex-1 flex-col pt-[2px]">
      <div className="pl-[9px]">
        <PanelTab
          icon={
            <svg width="34" height="34" viewBox="0 0 34 34">
              <ellipse cx="14" cy="29" rx="10" ry="3" fill="#000" opacity="0.6" filter="url(#soft)" />
              <path d="M22 22L30 31" stroke="#5f80c8" strokeWidth="4.5" strokeLinecap="round" />
              <circle cx="14" cy="14" r="12" fill="#4a5262" stroke="#6f8fd4" strokeWidth="3" />
              <path d="M12 6H16V9H12Z M10 11H16V19H19V21H10V19H12V13H10Z" fill="#eee" />
            </svg>
          }
          label="디테일"
          gap="w-[46px]"
        />
      </div>
      <div className="relative flex-1 overflow-hidden bg-[#3e3e3e] px-[4px]">
        <div className="flex h-[52px] items-center pl-[5px] pt-[4px]">
          <div className="flex h-[36px] w-[606px] items-center justify-between rounded-[3px] bg-[#cbcbcb] pl-[11px] text-[24px] font-light tracking-[0.4px] text-[#8a8a8a]">
            디테일 검색
            <SearchIcon />
          </div>
          <div className="ml-[17px] flex h-[46px] w-[54px] items-center justify-center rounded-[3px] border border-[#222] bg-gradient-to-b from-[#e4e4e4] to-[#b5b5b5]">
            <svg width="28" height="30" viewBox="0 0 28 30">
              {[0, 6, 12, 18, 24].map((y) => (
                <path key={y} d={`M0 ${y + 2}H4M6 ${y + 2}H16M18 ${y + 2}H28`} stroke="#707070" strokeWidth="4" />
              ))}
            </svg>
          </div>
          <div className="ml-[6px] flex items-center gap-[6px]">
            <EyeIcon />
            <Down w={17} h={11} />
          </div>
        </div>
        <Category label="액터 틱" />
        <Row label="Start with Tick Enabled"><Check on /></Row>
        <Row label="Tick Interval (secs)"><Num v="0.0" /></Row>
        <Row label="Allow Tick Before Begin"><Check /></Row>
        <More />
        <Category label="Default" />
        <Row label="Spawn Transform" caret />
        <div className="mb-[4px] h-[22px] w-[254px] border-r-2 border-[#252525]" />
        <Category label="리플리케이션" />
        <Row label="Only Relevant to Owner"><Check /></Row>
        <Row label="Always Relevant"><Check on /></Row>
        <Row label="Replicate Movement"><Check /></Row>
        <Row label="Net Load on Client"><Check on /></Row>
        <Row label="Net Use Owner Relevan"><Check /></Row>
        <Row label="Replay Rewindable"><Check on /></Row>
        <Row label="Replicates"><Check on /></Row>
        <Row label="Net Dormancy" tall><Select v="Awake" w="w-[209px]" /></Row>
        <Row label="Net Cull Distance Squar"><Num v="225000000.0" /></Row>
        <Row label="Net Update Frequency"><Num v="100.0" /></Row>
        <Row label="Min Net Update Frequen"><Num v="2.0" /></Row>
        <Row label="Net Priority"><Num v="1.0" /></Row>
        <More />
        <Category label="Actor" />
        <Row label="Can be Damaged"><Check /></Row>
        <Row label="Initial Life Span"><Num v="0.0" /></Row>
        <Row label="Spawn Collision Handlin" tall><Select v="Always Spawn, Ignore Collisions" w="w-[350px]" /></Row>
        <More />
        <Category label="입력" />
        <div className="absolute bottom-0 right-[19px] top-[56px] w-px bg-[#4c4c4c]" />
      </div>
    </div>
  );
}

export default function App() {
  return (
    <div className="flex h-[1502px] w-[3072px] flex-col overflow-hidden bg-[#222] font-['Roboto','Noto_Sans_CJK_KR',sans-serif]">
      <Defs />
      <TitleBar />
      <MenuBar />
      <div className="flex min-h-0 flex-1">
        <LeftPanel />
        <Center />
        <Details />
      </div>
    </div>
  );
}
